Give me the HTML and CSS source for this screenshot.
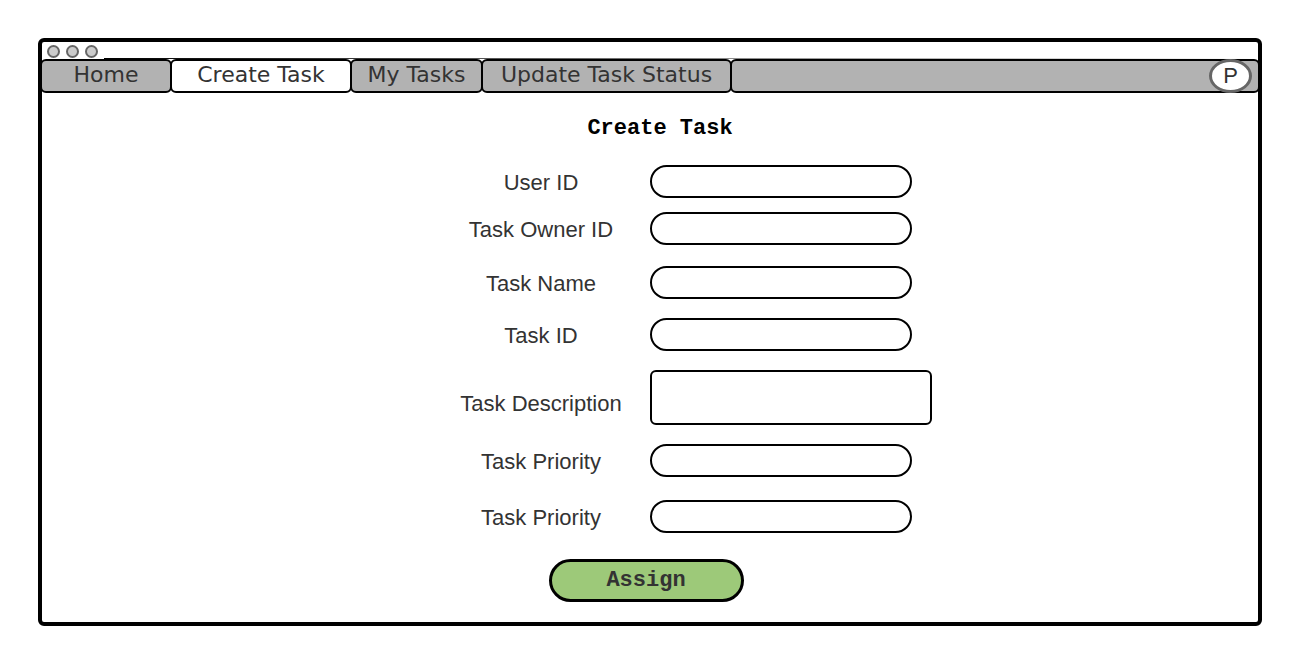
FILE: index.html
```html
<!DOCTYPE html>
<html lang="en">
<head>
<meta charset="utf-8">
<title>Create Task</title>
<link rel="stylesheet" href="styles.css">
</head>
<body>
<div class="window">
  <div class="titlebar">
    <div class="dots"><span class="dot"></span><span class="dot"></span><span class="dot"></span></div>
    <div class="rule"></div>
  </div>
  <nav class="tabs">
    <a class="tab tab-home" href="#">Home</a>
    <a class="tab tab-create active" href="#" aria-current="page">Create Task</a>
    <a class="tab tab-mine" href="#">My Tasks</a>
    <a class="tab tab-update" href="#">Update Task Status</a>
    <div class="tab filler"><button class="profile" type="button">P</button></div>
  </nav>
  <main class="content">
    <h1 class="heading">Create Task</h1>
    <form class="form">
      <div class="row"><label class="label" for="user">User ID</label><input class="field" id="user" type="text"></div>
      <div class="row tight"><label class="label" for="owner">Task Owner ID</label><input class="field" id="owner" type="text"></div>
      <div class="row medium"><label class="label" for="name">Task Name</label><input class="field" id="name" type="text"></div>
      <div class="row regular"><label class="label" for="task">Task ID</label><input class="field" id="task" type="text"></div>
      <div class="row regular tall"><label class="label" for="description">Task Description</label><textarea class="field area" id="description"></textarea></div>
      <div class="row regular"><label class="label" for="priority-a">Task Priority</label><input class="field" id="priority-a" type="text"></div>
      <div class="row wide"><label class="label" for="priority-b">Task Priority</label><input class="field" id="priority-b" type="text"></div>
      <div class="actions"><button class="assign" type="submit">Assign</button></div>
    </form>
  </main>
</div>
</body>
</html>
```
FILE: styles.css
```css
* { box-sizing: border-box; }
body {
  margin: 0;
  padding: 38px 40px 38px 38px;
  background: #fff;
  color: #333;
  font-family: "Liberation Sans", Arial, sans-serif;
  font-size: 22px;
}
.window {
  border: 4px solid #000;
  border-radius: 6px;
  background: #fff;
}
.titlebar {
  display: flex;
  align-items: flex-end;
  gap: 6px;
  height: 17px;
  padding-left: 5px;
}
.dots { display: flex; gap: 6px; padding-bottom: 1px; }
.dot {
  width: 13px;
  height: 13px;
  border: 2px solid #666;
  border-radius: 50%;
  background: #ccc;
}
.rule {
  flex: 1;
  height: 1px;
  background: linear-gradient(to right, #000, #333 20%, #fff);
}
.tabs { display: flex; margin: 0 -2px; }
.tab {
  height: 34px;
  border: 2px solid #000;
  border-radius: 6px;
  background: #b2b2b2;
  color: #333;
  font-family: "DejaVu Sans", sans-serif;
  font-size: 22px;
  line-height: 27px;
  text-align: center;
  text-decoration: none;
  white-space: nowrap;
}
.tab + .tab { margin-left: -2px; }
.active { background: #fff; }
.tab-home { width: 132px; }
.tab-create { width: 182px; }
.tab-mine { width: 133px; }
.tab-update { width: 251px; }
.filler {
  display: flex;
  flex: 1;
  align-items: center;
  justify-content: flex-end;
  padding-right: 6px;
}
.profile {
  flex: none;
  width: 43px;
  height: 34px;
  padding: 0;
  border: 3px solid #666;
  border-radius: 50%;
  background: #fff;
  color: #333;
  font-family: "Liberation Sans", Arial, sans-serif;
  font-size: 22px;
  line-height: 28px;
}
.content { padding: 22px 0 20px; }
.heading {
  margin: 0 0 23px;
  padding-left: 20px;
  color: #000;
  font-family: "Liberation Mono", monospace;
  font-size: 22px;
  line-height: 27px;
  text-align: center;
}
.form { width: 564px; margin: 0 auto; }
.row {
  display: grid;
  grid-template-columns: 254px 282px;
  gap: 28px;
  align-items: center;
}
.tight { margin-top: 14px; }
.medium { margin-top: 21px; }
.regular { margin-top: 19px; }
.wide { margin-top: 23px; }
.label {
  padding: 2px 0 0 92px;
  line-height: 26px;
  text-align: center;
  white-space: nowrap;
}
.tall { align-items: end; }
.tall .label { padding-bottom: 8px; }
.field {
  width: 262px;
  height: 33px;
  margin: 0;
  padding: 0 16px;
  border: 2px solid #000;
  border-radius: 17px;
  background: #fff;
  color: #333;
  font: inherit;
}
.area {
  display: block;
  width: 282px;
  height: 55px;
  padding: 4px 8px;
  border-radius: 6px;
  resize: none;
}
.actions {
  display: flex;
  justify-content: center;
  padding: 26px 8px 0 0;
}
.assign {
  width: 195px;
  height: 43px;
  padding: 0;
  border: 3px solid #000;
  border-radius: 22px;
  background: #9dc979;
  color: #333;
  font-family: "Liberation Mono", monospace;
  font-size: 22px;
  font-weight: bold;
}
```
